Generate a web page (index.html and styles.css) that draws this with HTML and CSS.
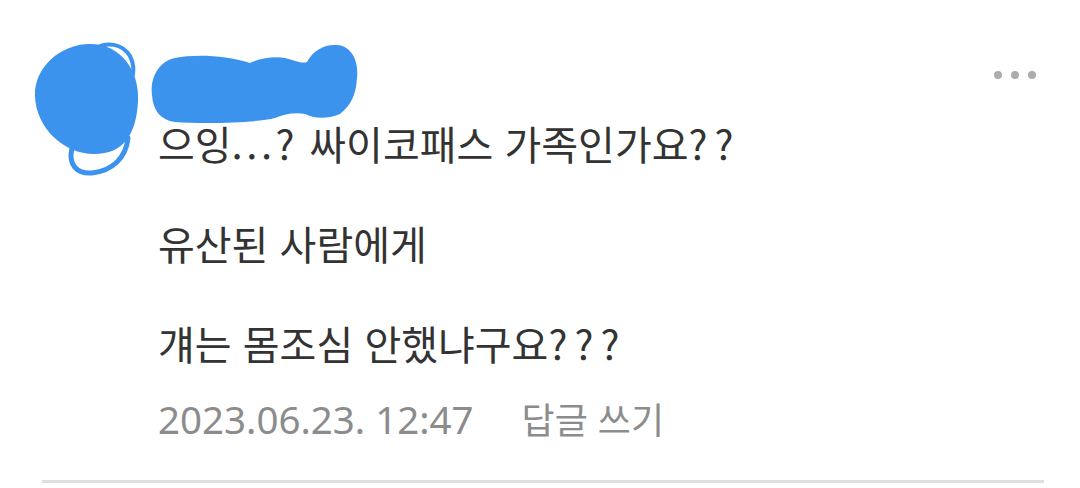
FILE: index.html
```html
<!DOCTYPE html>
<html lang="ko">
<head>
  <meta charset="UTF-8">
  <title>댓글</title>
  <link rel="stylesheet" href="styles.css">
</head>
<body>

<div class="comment">
  <div class="avatar">
    <svg width="115" height="140" viewBox="0 0 115 140">
      <path class="blob" d="M5 58 C4 30 30 6 60 6 C92 6 110 34 108 64 C106 96 94 116 64 116 C34 116 6 90 5 58 Z"/>
      <path class="scribble" d="M42 110 C38 126 46 136 62 135 C82 133 96 120 98 100"/>
      <path class="scribble thin" d="M66 10 C76 4 92 5 100 18 C104 26 104 34 102 40"/>
    </svg>
  </div>

  <div class="body">
    <div class="head">
      <svg class="name" width="220" height="88" viewBox="0 0 220 88">
        <path class="blob" d="M7 55 C5 40 12 22 30 18 C50 14 80 15 105 23 C115 18 130 16 140 18 C150 20 155 24 162 22 C168 10 180 4 192 5 C206 6 214 20 212 38 C211 55 206 65 195 74 C180 80 168 78 160 74 C150 72 140 74 130 78 C110 83 60 84 30 82 C15 80 8 70 7 55 Z"/>
      </svg>
      <div class="more">
        <span></span><span></span><span></span>
      </div>
    </div>

    <p class="text">으잉<span class="dots">...?</span> 싸이코패스 가족인가요<span class="q">??</span></p>
    <p class="text">유산된 사람에게</p>
    <p class="text">걔는 몸조심 안했냐구요<span class="q">???</span></p>

    <div class="meta">
      <span class="date">2023.06.23. 12:47</span>
      <span class="reply">답글 쓰기</span>
    </div>
  </div>
</div>

<div class="divider"></div>

</body>
</html>
```

FILE: styles.css
```css
body {
  margin: 0;
  background-color: #fff;
  font-family: "Noto Sans", "Noto Sans CJK KR", sans-serif;
  color: #333;
}

.comment {
  display: flex;
  padding: 38px 42px 0 30px;
}

.avatar {
  width: 120px;
  flex-shrink: 0;
}

.avatar svg,
.name {
  display: block;
}

.blob {
  fill: #3b93ee;
}

.scribble {
  fill: none;
  stroke: #3b93ee;
  stroke-width: 5;
  stroke-linecap: round;
}

.scribble.thin {
  stroke-width: 4;
}

.body {
  flex: 1;
}

.head {
  display: flex;
  justify-content: space-between;
  align-items: flex-start;
  height: 80px;
  margin-left: -5px;
}

.name {
  margin-top: 2px;
}

.more {
  display: flex;
  gap: 9px;
  margin-top: 33px;
  margin-right: 2px;
}

.more span {
  width: 8px;
  height: 8px;
  border-radius: 50%;
  background-color: #acacac;
}

.text {
  margin: 0 0 50px 8px;
  font-family: "Noto Sans CJK KR", sans-serif;
  font-size: 40px;
  line-height: 50px;
  color: #333;
}

.q {
  letter-spacing: 7px;
}

.dots {
  letter-spacing: 3.5px;
}

.meta {
  margin: -25px 0 0 8px;
  display: flex;
  align-items: baseline;
  gap: 48px;
  font-size: 38.5px;
  line-height: 50px;
  color: #8c8c8c;
}

.reply {
  font-family: "Noto Sans CJK KR", sans-serif;
  font-size: 36px;
}

.divider {
  margin: 36px 36px 0 42px;
  height: 3px;
  background-color: #dedede;
}
```
